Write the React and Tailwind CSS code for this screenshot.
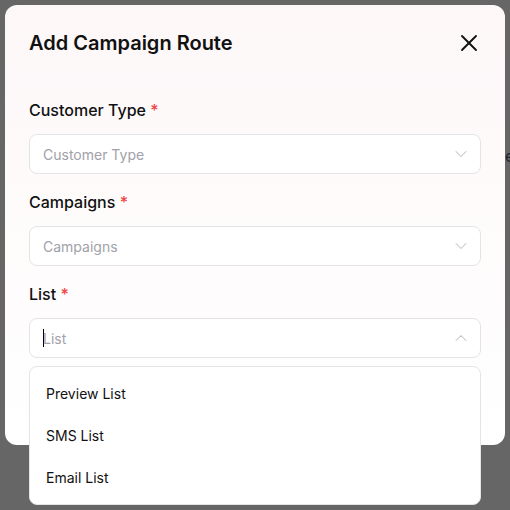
import React from "react";
import { X, ChevronDown, ChevronUp } from "lucide-react";

function Field({ label, placeholder, open, children }) {
  return (
    <div className="flex flex-col">
      <label className="text-[16px] leading-6 font-medium text-[#111111] mb-3">
        {label} <span className="text-[#ef4444]">*</span>
      </label>
      <div className="h-10 rounded-lg border border-[#e4e4e7] bg-white flex items-center justify-between pl-[13px] pr-[9px]">
        <div className="flex items-center">
          {open && <span className="w-px h-[18px] bg-black mr-[-1px]" />}
          <span className="text-[14px] text-[#a1a1aa]">{placeholder}</span>
        </div>
        {open ? (
          <ChevronUp size={20} strokeWidth={1.25} className="text-[#c4c4c8]" />
        ) : (
          <ChevronDown size={20} strokeWidth={1.25} className="text-[#c4c4c8]" />
        )}
      </div>
      {children}
    </div>
  );
}

export default function App() {
  const lists = ["Preview List", "SMS List", "Email List"];

  return (
    <div
      className="relative w-[510px] h-[510px] bg-[#666666] overflow-hidden"
      style={{ fontFamily: "Inter, 'Noto Sans', sans-serif" }}
    >
      <span className="absolute left-[505px] top-[144px] text-[16px] text-[#1a2530]">e</span>

      <div className="absolute left-[5px] top-[5px] w-[500px] h-[440px] rounded-xl bg-gradient-to-b from-[#fdf7f8] to-white via-[#fefbfb]">
        <div className="flex items-center justify-between px-6 pt-6">
          <h2 className="text-[20px] leading-7 font-semibold text-[#111111]">Add Campaign Route</h2>
          <X size={28} strokeWidth={1.6} className="text-[#111111] mr-[-2px]" />
        </div>

        <div className="flex flex-col gap-4 px-6 pt-[41px]">
          <Field label="Customer Type" placeholder="Customer Type" />
          <Field label="Campaigns" placeholder="Campaigns" />
          <Field label="List" placeholder="List" open>
            <div className="relative">
              <div className="absolute left-0 right-0 top-2 h-[139px] rounded-lg border border-[#e4e4e7] bg-white py-[5px]">
                {lists.map((item) => (
                  <div
                    key={item}
                    className="h-[42px] flex items-center pl-4 text-[14px] text-[#111111]"
                  >
                    {item}
                  </div>
                ))}
              </div>
            </div>
          </Field>
        </div>
      </div>
    </div>
  );
}
